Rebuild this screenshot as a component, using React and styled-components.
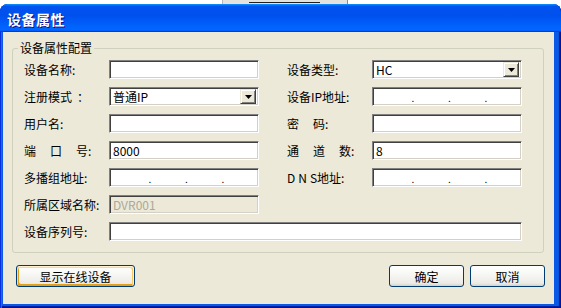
import styled, { createGlobalStyle } from "styled-components";

const GlobalStyle = createGlobalStyle`
  html, body {
    margin: 0;
    padding: 0;
    background: #fff;
    overflow: hidden;
  }
  body {
    font-family: "Noto Sans CJK SC", "Noto Sans", sans-serif;
    font-size: 12px;
  }
`;

const Screen = styled.div`
  width: 561px;
  height: 308px;
  display: flex;
  flex-direction: column;
`;

const BackStrip = styled.div`
  height: 4px;
  flex-shrink: 0;
  display: flex;
  padding-left: 222px;
`;

const BackPiece = styled.div`
  width: 126px;
  box-sizing: border-box;
  background: ${(p) => (p.$bottom ? "#E6E6EE" : "#E3E2DD")};
  border-left: 1px solid #B8B8B8;
  border-right: 1px solid #8C8C8C;
  padding: 2px 0 0 26px;
`;

const BackLine = styled.div`
  width: 71px;
  height: 1px;
  background: #222;
`;

const Window = styled.div`
  height: 300px;
  flex-shrink: 0;
  display: flex;
  flex-direction: column;
  background: #0A58E6;
  border-radius: 8px 8px 0 0;
  padding: 0 7px 4px 3px;
  box-shadow: inset 1px 0 #0831d9, inset 2px 0 #166aee, inset -1px -1px #00138c,
    inset -2px -2px #001ea0, inset -3px 0 #0855dd;
`;

const TitleBar = styled.div`
  height: 28px;
  flex-shrink: 0;
  margin: 0 -7px 0 -3px;
  padding: 2px 0 0 7px;
  box-sizing: border-box;
  display: flex;
  align-items: center;
  border-radius: 8px 8px 0 0;
  background: linear-gradient(
    180deg,
    #0997ff,
    #0053ee 8%,
    #0050ee 40%,
    #0066ff 88%,
    #0066ff 93%,
    #005bff 95%,
    #003dd7 96%,
    #003dd7
  );
`;

const Title = styled.span`
  color: #fff;
  font-size: 14px;
  font-weight: 700;
  letter-spacing: 0.5px;
  text-shadow: 1px 1px #0f1089;
`;

const Client = styled.div`
  flex: 1;
  background: #ECE9D8;
  padding: 9px 10px 0 9px;
  display: flex;
  flex-direction: column;
`;

const GroupBox = styled.fieldset`
  margin: 0;
  border: 1px solid #D0D0BF;
  border-radius: 3px;
  padding: 5px 20px 11px 11px;
  min-width: 0;
`;

const GroupTitle = styled.legend`
  margin-left: -6px;
  padding: 0 2px;
  font-size: 12px;
  line-height: 14px;
  color: #000;
`;

const Form = styled.div`
  display: flex;
  flex-direction: column;
  gap: 8px;
`;

const Row = styled.div`
  display: flex;
  gap: 28px;
  height: 19px;
`;

const Field = styled.div`
  display: flex;
  align-items: center;
`;

const Label = styled.span`
  width: 85px;
  flex-shrink: 0;
  white-space: nowrap;
  color: #000;
  font-size: 12px;
  line-height: 19px;
`;

const Gap = styled.span`
  display: inline-block;
  width: ${(p) => p.$w}px;
`;

const TextBox = styled.div`
  width: ${(p) => p.$w || 150}px;
  height: 19px;
  box-sizing: border-box;
  display: flex;
  align-items: center;
  justify-content: space-between;
  background: ${(p) => (p.$disabled ? "#ECE9D8" : "#fff")};
  color: ${(p) => (p.$disabled ? "#ACA899" : "#000")};
  border: 1px solid;
  border-color: #808080 #fff #fff #808080;
  box-shadow: inset 1px 1px #404040, inset -1px -1px #D4D0C8;
  padding: 0 2px 0 3px;
  font-size: 12px;
  white-space: nowrap;
  overflow: hidden;
`;

const IpBox = styled(TextBox)`
  padding: 0 0 0 5px;
  justify-content: flex-start;
`;

const IpSeg = styled.span`
  flex: 1;
`;

const IpDot = styled.span`
  width: 3px;
  text-align: center;
  font-size: 10px;
  line-height: 12px;
  padding-top: 3px;
`;

const DropButton = styled.span`
  width: 16px;
  height: 15px;
  box-sizing: border-box;
  display: flex;
  align-items: center;
  justify-content: center;
  background: #ECE9D8;
  border: 1px solid;
  border-color: #ECE9D8 #404040 #404040 #ECE9D8;
  box-shadow: inset 1px 1px #fff, inset -1px -1px #808080;
`;

const ButtonRow = styled.div`
  display: flex;
  gap: 6px;
  margin: 12px -1px 0 4px;
`;

const Spacer = styled.div`
  flex: 1;
`;

const Button = styled.button`
  width: ${(p) => p.$w}px;
  height: 22px;
  box-sizing: border-box;
  padding: 0;
  font-family: "Noto Sans CJK SC", "Noto Sans", sans-serif;
  font-size: 12px;
  color: #000;
  border: 1px solid #003c74;
  border-radius: 3px;
  background: linear-gradient(180deg, #fff 0%, #f7f7f4 40%, #ecebe6 86%, #d6d0c5 100%);
  box-shadow: ${(p) =>
    p.$focused
      ? "inset -1px 1px #fff0cf, inset 1px 2px #fdd889, inset -2px 2px #fbc761, inset 2px -2px #e5a01a"
      : "none"};
`;

const Arrow = () => (
  <svg width="7" height="4" viewBox="0 0 7 4">
    <polygon points="0,0 7,0 3.5,4" fill="#000" />
  </svg>
);

const Combo = ({ value }) => (
  <TextBox>
    <span>{value}</span>
    <DropButton>
      <Arrow />
    </DropButton>
  </TextBox>
);

const IpField = () => (
  <IpBox>
    <IpSeg />
    <IpDot>.</IpDot>
    <IpSeg />
    <IpDot>.</IpDot>
    <IpSeg />
    <IpDot>.</IpDot>
    <IpSeg />
  </IpBox>
);

export default function App() {
  return (
    <Screen>
      <GlobalStyle />
      <BackStrip>
        <BackPiece>
          <BackLine />
        </BackPiece>
      </BackStrip>
      <Window>
        <TitleBar>
          <Title>设备属性</Title>
        </TitleBar>
        <Client>
          <GroupBox>
            <GroupTitle>设备属性配置</GroupTitle>
            <Form>
              <Row>
                <Field>
                  <Label>设备名称:</Label>
                  <TextBox />
                </Field>
                <Field>
                  <Label>设备类型:</Label>
                  <Combo value="HC" />
                </Field>
              </Row>
              <Row>
                <Field>
                  <Label>
                    注册模式<Gap $w={5} />：
                  </Label>
                  <Combo value="普通IP" />
                </Field>
                <Field>
                  <Label>设备IP地址:</Label>
                  <IpField />
                </Field>
              </Row>
              <Row>
                <Field>
                  <Label>用户名:</Label>
                  <TextBox />
                </Field>
                <Field>
                  <Label>
                    密<Gap $w={14} />码:
                  </Label>
                  <TextBox />
                </Field>
              </Row>
              <Row>
                <Field>
                  <Label>
                    端<Gap $w={14} />口<Gap $w={14} />号:
                  </Label>
                  <TextBox>8000</TextBox>
                </Field>
                <Field>
                  <Label>
                    通<Gap $w={14} />道<Gap $w={14} />数:
                  </Label>
                  <TextBox>8</TextBox>
                </Field>
              </Row>
              <Row>
                <Field>
                  <Label>多播组地址:</Label>
                  <IpField />
                </Field>
                <Field>
                  <Label>
                    D<Gap $w={3} />N<Gap $w={3} />S地址:
                  </Label>
                  <IpField />
                </Field>
              </Row>
              <Row>
                <Field>
                  <Label>所属区域名称:</Label>
                  <TextBox $disabled>DVR001</TextBox>
                </Field>
              </Row>
              <Row>
                <Field>
                  <Label>设备序列号:</Label>
                  <TextBox $w={413} />
                </Field>
              </Row>
            </Form>
          </GroupBox>
          <ButtonRow>
            <Button $w={119} $focused>
              显示在线设备
            </Button>
            <Spacer />
            <Button $w={75}>确定</Button>
            <Button $w={75}>取消</Button>
          </ButtonRow>
        </Client>
      </Window>
      <BackStrip>
        <BackPiece $bottom />
      </BackStrip>
    </Screen>
  );
}
